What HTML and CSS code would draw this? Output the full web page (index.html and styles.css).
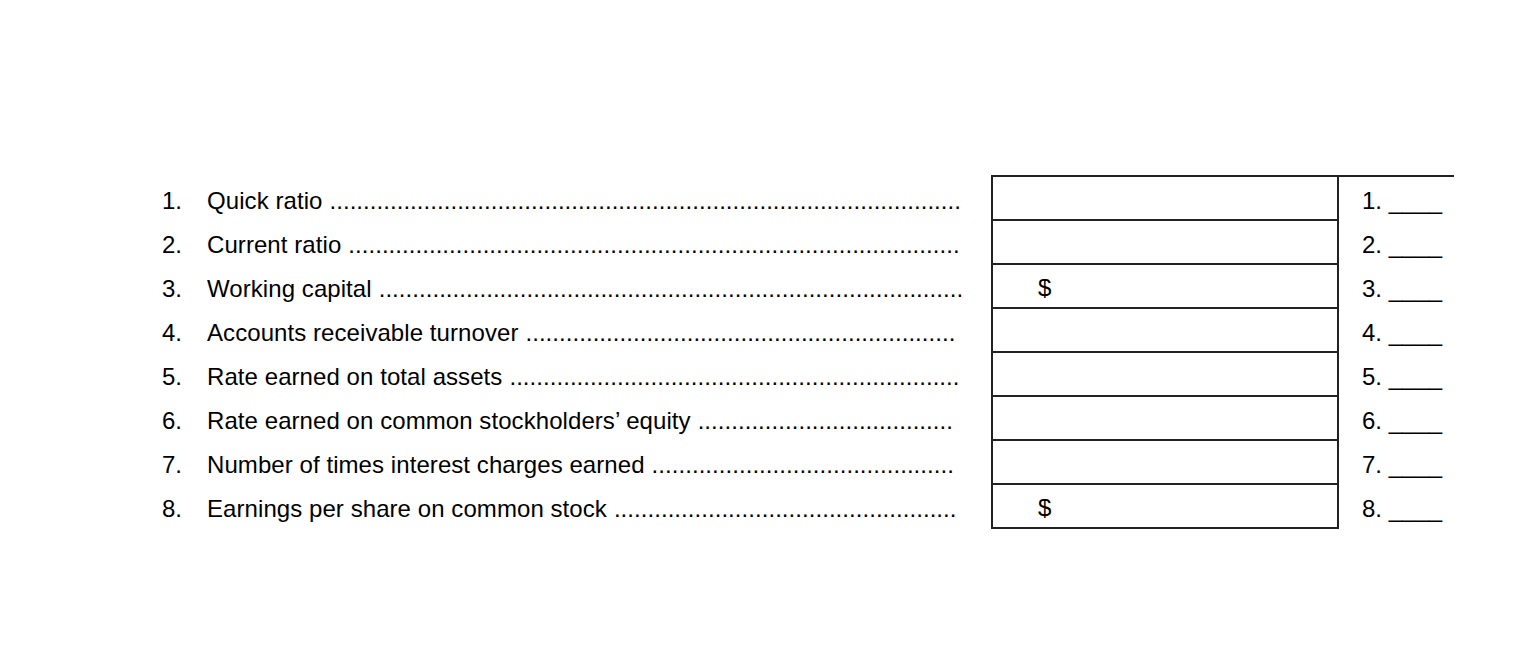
FILE: index.html
```html
<!DOCTYPE html>
<html>
<head>
<meta charset="utf-8">
<link rel="stylesheet" href="styles.css">
</head>
<body>
<div class="sheet">
  <div class="row first">
    <div class="q"><span class="num">1.</span><span class="label">Quick ratio</span><span class="dots">..............................................................................................</span></div>
    <div class="cell"></div>
    <div class="ans">1. ____</div>
  </div>
  <div class="row">
    <div class="q"><span class="num">2.</span><span class="label">Current ratio</span><span class="dots">...........................................................................................</span></div>
    <div class="cell"></div>
    <div class="ans">2. ____</div>
  </div>
  <div class="row">
    <div class="q"><span class="num">3.</span><span class="label">Working capital</span><span class="dots">.......................................................................................</span></div>
    <div class="cell"><span class="dollar">$</span></div>
    <div class="ans">3. ____</div>
  </div>
  <div class="row">
    <div class="q"><span class="num">4.</span><span class="label">Accounts receivable turnover</span><span class="dots">................................................................</span></div>
    <div class="cell"></div>
    <div class="ans">4. ____</div>
  </div>
  <div class="row">
    <div class="q"><span class="num">5.</span><span class="label">Rate earned on total assets</span><span class="dots">...................................................................</span></div>
    <div class="cell"></div>
    <div class="ans">5. ____</div>
  </div>
  <div class="row">
    <div class="q"><span class="num">6.</span><span class="label">Rate earned on common stockholders’ equity</span><span class="dots">......................................</span></div>
    <div class="cell"></div>
    <div class="ans">6. ____</div>
  </div>
  <div class="row">
    <div class="q"><span class="num">7.</span><span class="label">Number of times interest charges earned</span><span class="dots">.............................................</span></div>
    <div class="cell"></div>
    <div class="ans">7. ____</div>
  </div>
  <div class="row">
    <div class="q"><span class="num">8.</span><span class="label">Earnings per share on common stock</span><span class="dots">...................................................</span></div>
    <div class="cell"><span class="dollar">$</span></div>
    <div class="ans">8. ____</div>
  </div>
</div>
</body>
</html>
```
FILE: styles.css
```css
html, body {
  margin: 0;
  padding: 0;
  background: #ffffff;
}
body {
  font-family: "Liberation Sans", Arial, sans-serif;
  font-size: 24px;
  color: #000;
}
.sheet {
  padding-top: 175px;
  padding-left: 162px;
  display: flex;
  flex-direction: column;
}
.row {
  display: flex;
  align-items: stretch;
}
.q {
  width: 829px;
  box-sizing: border-box;
  display: flex;
  align-items: center;
  white-space: nowrap;
  height: 44px;
  padding-top: 3px;
}
.num {
  width: 45px;
  flex: none;
}
.label {
  flex: none;
  letter-spacing: 0.07px;
}
.dots {
  flex: none;
  margin-left: 7px;
  letter-spacing: 0.05px;
}
.cell {
  width: 348px;
  border-left: 2px solid #222;
  border-right: 2px solid #222;
  border-bottom: 2px solid #222;
  display: flex;
  align-items: center;
  padding-left: 45px;
  padding-top: 3px;
  box-sizing: border-box;
  height: 44px;
}
.ans {
  width: 115px;
  box-sizing: border-box;
  padding-left: 23px;
  padding-top: 3px;
  display: flex;
  align-items: center;
  white-space: pre;
  height: 44px;
}
.row.first .cell,
.row.first .ans {
  border-top: 2px solid #222;
  height: 46px;
}
.row.first .q {
  height: 46px;
  padding-top: 5px;
}
```
